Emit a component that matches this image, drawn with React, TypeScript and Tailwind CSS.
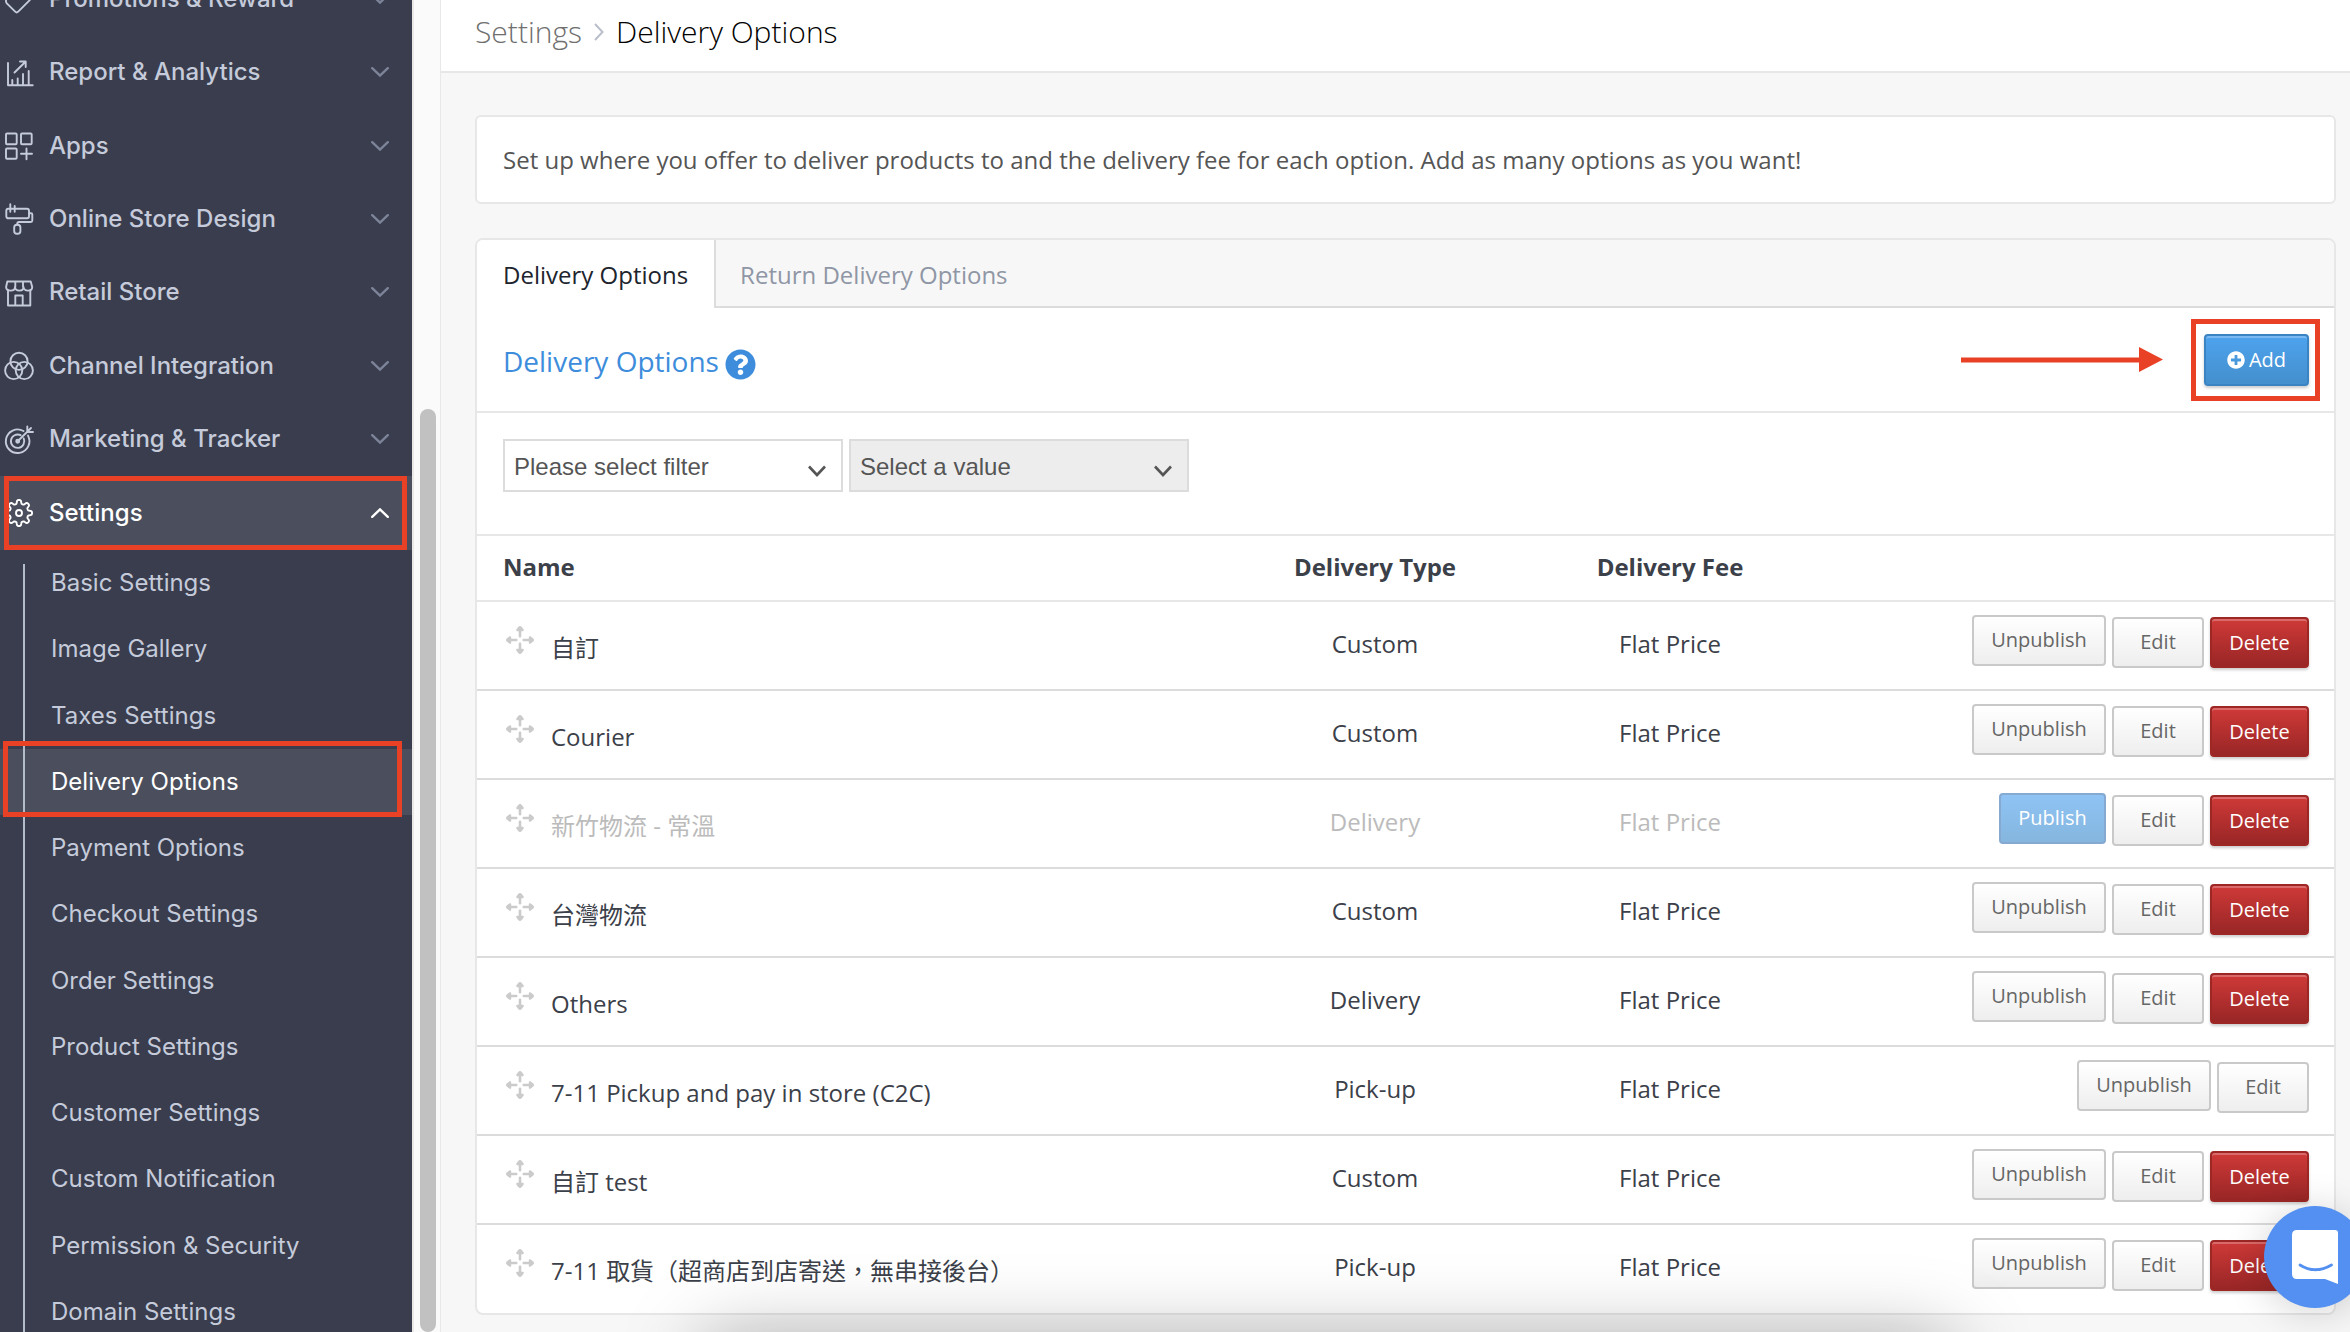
import React from 'react';
import { FaPlusCircle, FaQuestionCircle } from 'react-icons/fa';
import clsx from 'clsx';

interface DeliveryOption {
  name: string;
  type: string;
  fee: string;
  published: boolean;
  deletable: boolean;
}

const options: DeliveryOption[] = [
  { name: '自訂', type: 'Custom', fee: 'Flat Price', published: true, deletable: true },
  { name: 'Courier', type: 'Custom', fee: 'Flat Price', published: true, deletable: true },
  { name: '新竹物流 - 常溫', type: 'Delivery', fee: 'Flat Price', published: false, deletable: true },
  { name: '台灣物流', type: 'Custom', fee: 'Flat Price', published: true, deletable: true },
  { name: 'Others', type: 'Delivery', fee: 'Flat Price', published: true, deletable: true },
  { name: '7-11 Pickup and pay in store (C2C)', type: 'Pick-up', fee: 'Flat Price', published: true, deletable: false },
  { name: '自訂 test', type: 'Custom', fee: 'Flat Price', published: true, deletable: true },
  { name: '7-11 取貨（超商店到店寄送，無串接後台）', type: 'Pick-up', fee: 'Flat Price', published: true, deletable: true },
];

// Outline of the eight-toothed settings gear
const gearPath = (() => {
  const points: string[] = [];
  for (let i = 0; i < 192; i++) {
    const angle = (i / 192) * Math.PI * 2;
    const radius = 11.2 + 1.9 * Math.tanh(2 * Math.cos(angle * 8));
    points.push(`${(14 + radius * Math.cos(angle)).toFixed(2)} ${(14 + radius * Math.sin(angle)).toFixed(2)}`);
  }
  return `M${points.join('L')}Z`;
})();

const icons: Record<string, React.ReactNode> = {
  promotions: <path d="M1 4v12q0 1.500.8 2.300l8.400 8.400q1.500 1.500 3 0l11.300-11.300q1.500-1.500 0-3L14 2H3Q1 2 1 4Z" />,
  report: (
    <>
      <path d="M3 5v22.300h24.700M7.300 27v-5M12.700 27v-6.500M18 27V16M23.700 27V13" />
      <path d="M9.500 14.500L20.500 3.700M15 3.500h5.700V9" />
    </>
  ),
  apps: (
    <>
      <rect x="1" y="1.500" width="10.700" height="10.700" rx="1" />
      <rect x="16" y="1.500" width="10.700" height="10.700" rx="1" />
      <rect x="1" y="16.500" width="10.700" height="10.300" rx="1" />
      <path d="M21.500 16.500v10.700M16 21.800h11" />
    </>
  ),
  design: (
    <>
      <rect x="1.300" y="3.700" width="22.700" height="9.600" rx="2" />
      <path d="M5.300-.7v7.400M9.700.9v5.800M24 8.200h2q1.300 0 1.300 1.300v6q0 1.500-1.500 1.500H14q-1.700 0-1.700 1.600v1.100" />
      <rect x="9.200" y="19.700" width="6.200" height="9" rx="2.800" />
    </>
  ),
  store: (
    <>
      <path d="M3 12.300V27.500h22.300V12.300M10.300 27.500V17.500h7.400v10" />
      <path d="M2.300 3.500h23.400l1.500 5.500c0 4.800-8.200 4.800-8.700 0 0 4.800-8.200 4.800-8.500 0 0 4.800-8.700 4.800-8.900 0ZM10.300 3.500V9M18 3.500V9" />
    </>
  ),
  channel: (
    <>
      <circle cx="14" cy="9.300" r="8.600" />
      <circle cx="8.700" cy="18.500" r="8.600" />
      <circle cx="19.300" cy="18.500" r="8.600" />
    </>
  ),
  marketing: (
    <>
      <path d="M18.500 6A11.800 11.800 0 1 0 23 10.600" />
      <path d="M15.600 10.200a6.700 6.700 0 1 0 3.100 3.200M12.700 16.200L22 7M22.300 1.500V7h5.700M22 7l4-4" />
      <circle cx="12.700" cy="16.200" r="1.500" />
    </>
  ),
  settings: (
    <>
      <path d={gearPath} />
      <circle cx="14" cy="14" r="3" />
    </>
  ),
};

const menu = [
  { icon: 'promotions', label: 'Promotions & Reward' },
  { icon: 'report', label: 'Report & Analytics' },
  { icon: 'apps', label: 'Apps' },
  { icon: 'design', label: 'Online Store Design' },
  { icon: 'store', label: 'Retail Store' },
  { icon: 'channel', label: 'Channel Integration' },
  { icon: 'marketing', label: 'Marketing & Tracker' },
];

const subMenu = [
  'Basic Settings',
  'Image Gallery',
  'Taxes Settings',
  'Delivery Options',
  'Payment Options',
  'Checkout Settings',
  'Order Settings',
  'Product Settings',
  'Customer Settings',
  'Custom Notification',
  'Permission & Security',
  'Domain Settings',
];

const MenuIcon: React.FC<{ name: string }> = ({ name }) => (
  <svg
    viewBox="0 0 28 28"
    className="h-7 w-7 shrink-0 overflow-visible"
    fill="none"
    stroke="currentColor"
    strokeWidth="1.9"
    strokeLinejoin="round"
    strokeLinecap="round"
    aria-hidden="true"
  >
    {icons[name]}
  </svg>
);

const Chevron: React.FC<{ className?: string }> = ({ className }) => (
  <svg viewBox="0 0 18 10" className={clsx('h-2.5 w-[18px] shrink-0', className)} fill="none" stroke="currentColor" strokeWidth="2.4" aria-hidden="true">
    <path d="M1.200 1.200L9 8.600l7.800-7.400" strokeLinecap="round" />
  </svg>
);

const MoveIcon = () => (
  <svg viewBox="0 0 28 28" className="ml-[3px] h-7 w-7 shrink-0 text-[#cbcbcb]" fill="currentColor" aria-hidden="true">
    {[0, 90, 180, 270].map((turn) => (
      <path key={turn} d="M14 0Q15 0 15.800 1L17.700 3.600Q18.200 5 17 5.200H15.300V10.500Q15.300 11.500 14 11.500T12.700 10.500V5.200H11Q9.800 5 10.300 3.600L12.200 1Q13 0 14 0Z" transform={`rotate(${turn} 14 14)`} />
    ))}
  </svg>
);

const Sidebar = () => (
  <aside className="w-[414px] shrink-0 overflow-hidden border-r-2 border-[#ebe9e8] bg-[#393d4d] font-[Inter,sans-serif] text-2xl text-[#c5cbda]">
    <nav aria-label="Main menu">
      {/* The menu is scrolled, so its first entry is partly out of view */}
      <div className="-mt-[38px] grid h-[514px] auto-rows-fr">
        {menu.map((item) => (
          <button key={item.label} type="button" className="flex items-center gap-4 pr-[23px] pl-[5px] font-medium">
            <MenuIcon name={item.icon} />
            <span className="flex-1 text-left">{item.label}</span>
            <Chevron className="text-[#7d8499]" />
          </button>
        ))}
      </div>
      <button type="button" aria-expanded="true" className="relative flex h-[74px] w-full items-center gap-4 bg-[#4b4f5d] pr-[23px] pl-[5px] font-medium text-white">
        <MenuIcon name="settings" />
        <span className="flex-1 text-left">Settings</span>
        <Chevron className="rotate-180" />
        <span className="absolute inset-y-0 right-[5px] left-1 border-5 border-[#e94126]" />
      </button>

      <div className="relative">
        <ul className="grid h-[795px] auto-rows-fr">
          {subMenu.map((label) => {
            const active = label === 'Delivery Options';
            return (
              <li key={label} className={clsx('relative', active && 'z-10 bg-[#4b4f5d]')}>
                <a href="#" className={clsx('flex h-full items-center pl-[51px]', active && 'text-white')}>
                  {label}
                </a>
                {active && (
                  <>
                    <span className="absolute inset-y-0 left-[23px] w-0.5 bg-[#b3bcc9]" />
                    <span className="absolute -top-2 right-[10px] -bottom-0.5 left-[3px] border-5 border-[#e94126]" />
                  </>
                )}
              </li>
            );
          })}
        </ul>
        {/* Guide line along the sub menu */}
        <span className="absolute top-[14px] bottom-0 left-[23px] w-0.5 bg-[#b3bcc9]" />
      </div>
    </nav>
  </aside>
);

const plainButton = 'border-[#c9c9c9] bg-gradient-to-b from-white to-[#eeeeee] text-[#666666]';
const dangerButton =
  'border-[#9c2725] bg-gradient-to-b from-[#cf3a38] to-[#992626] text-white shadow-[inset_0_2px_0_rgba(255,255,255,0.25),0_2px_3px_rgba(0,0,0,0.2)]';

const Row: React.FC<{ option: DeliveryOption }> = ({ option }) => (
  <tr className={clsx('group', option.published ? 'text-[#3b4049]' : 'text-[#bbbbbb]')}>
    <td className="h-[89px] border-b-2 border-[#dcdcdc] pl-[26px] align-top group-last:h-[88px] group-last:border-b-0">
      <div className="flex items-start gap-[17px] pt-6">
        <MoveIcon />
        <span className="pt-1 leading-9">{option.name}</span>
      </div>
    </td>
    <td className="border-b-2 border-[#dcdcdc] pt-6 text-center align-top leading-9 group-last:border-b-0">{option.type}</td>
    <td className="border-b-2 border-[#dcdcdc] pt-6 text-center align-top leading-9 group-last:border-b-0">{option.fee}</td>
    <td className="border-b-2 border-[#dcdcdc] pt-[13px] pr-[25px] align-top group-last:border-b-0">
      <div className="flex items-end justify-end gap-1.5 text-xl leading-7">
        {option.published ? (
          <button type="button" className={clsx('mb-0.5 h-[51px] w-[134px] rounded border-2 pb-0.5', plainButton)}>Unpublish</button>
        ) : (
          <button type="button" className="mb-0.5 h-[51px] w-[107px] rounded border-2 border-[#86a9d2] bg-gradient-to-b from-[#8fc3f4] to-[#84b6de] pb-px text-white">Publish</button>
        )}
        <button type="button" className={clsx('h-[51px] w-[92px] rounded border-2 pb-px', plainButton)}>Edit</button>
        {option.deletable && (
          <button type="button" className={clsx('h-[51px] w-[99px] rounded border-2 font-medium', dangerButton)}>Delete</button>
        )}
      </div>
    </td>
  </tr>
);

const Select: React.FC<{ id: string; label: string; disabled?: boolean }> = ({ id, label, disabled }) => (
  <div className="relative w-[340px]">
    <select
      id={id}
      aria-label={label}
      disabled={disabled}
      className={clsx(
        'block h-[53px] w-full appearance-none border-2 border-[#dcdcdc] px-[9px] pt-0.5 font-["Liberation_Sans",Arial,sans-serif] text-2xl text-[#555555] opacity-100',
        disabled ? 'bg-[#ededed]' : 'bg-white',
      )}
    >
      <option>{label}</option>
    </select>
    <svg viewBox="0 0 18 12" className="pointer-events-none absolute top-[26px] right-[17px] h-3 w-[18px]" fill="none" stroke="#555555" strokeWidth="2.6" aria-hidden="true">
      <path d="M1 1.500L9 10l8-8.500" />
    </svg>
  </div>
);

export default function App() {
  return (
    <div className='relative flex h-screen overflow-hidden bg-[#f7f7f7] font-["Open_Sans","Noto_Sans_CJK_TC",sans-serif] text-2xl'>
      <Sidebar />

      {/* Scrollbar */}
      <div className="flex w-[27px] shrink-0 border-r border-[#e8e8e8] bg-[#fafafa] pt-[409px] pl-1.5">
        <div className="w-4 rounded-full bg-[#c1c1c1]" />
      </div>

      <main className="min-w-0 flex-1">
        <header className="border-b-2 border-[#e7e7e7] bg-white pt-3 pb-[19px] pl-[34px]">
          <nav aria-label="Breadcrumb" className="flex items-center text-3xl leading-10 font-light">
            <a href="#" className="text-[#6f6f6f]">Settings</a>
            <svg viewBox="0 0 10 18" className="mx-3 h-[18px] w-2.5" fill="none" stroke="#b9bfca" strokeWidth="2" aria-hidden="true">
              <path d="M1 1l7.500 8L1 17" />
            </svg>
            <span className="text-black">Delivery Options</span>
          </nav>
        </header>

        <div className="pt-[42px] pr-[14px] pl-[34px]">
          <p className="rounded-md border-2 border-[#e7e7e7] bg-white px-[26px] py-6 leading-[37px] text-[#555555]">
            Set up where you offer to deliver products to and the delivery fee for each option. Add as many options as you want!
          </p>

          <section className="mt-[34px] overflow-hidden rounded-lg border-2 border-[#e7e7e7] bg-white">
            <div role="tablist" className="flex h-[68px] bg-[#f7f7f7]">
              <button type="button" role="tab" aria-selected="true" className="border-r-2 border-[#dcdcdc] bg-white px-[26px] pt-0.5 text-[#20242d]">
                Delivery Options
              </button>
              <button type="button" role="tab" aria-selected="false" className="border-b-2 border-[#dcdcdc] px-6 pt-1 text-[#8f96a5]">
                Return Delivery Options
              </button>
              <div className="flex-1 border-b-2 border-[#dcdcdc]" />
            </div>

            <div className="flex h-[105px] items-center border-b-2 border-[#e7e7e7] pr-[25px] pl-[26px]">
              <h1 className="flex flex-1 items-center gap-1.5 pt-[3px] text-[28px] leading-10 text-[#3d8ddc]">
                Delivery Options
                <FaQuestionCircle className="mt-1.5 h-[31px] w-[31px]" />
              </h1>
              <svg viewBox="0 0 202 25" className="mr-[41px] h-[25px] w-[202px]" fill="#e94126" aria-hidden="true">
                <path d="M0 10.500H178V0L202 12.500 178 25V15.500H0Z" />
              </svg>
              <div className="relative">
                <button
                  type="button"
                  className="flex h-[52px] w-[105px] items-center justify-center gap-1 rounded border-2 border-[#3a84c4] bg-gradient-to-b from-[#4ea3ee] to-[#448fcd] text-xl text-white shadow-[inset_0_2px_0_rgba(255,255,255,0.25),0_2px_3px_rgba(0,0,0,0.2)]"
                >
                  <FaPlusCircle className="h-[18px] w-[18px]" />
                  Add
                </button>
                <span className="pointer-events-none absolute -inset-y-[15px] -right-[11px] -left-[13px] border-5 border-[#e94126]" />
              </div>
            </div>

            <div className="flex gap-1.5 border-b-2 border-[#e7e7e7] pt-[26px] pb-[42px] pl-[26px]">
              <Select id="filter" label="Please select filter" />
              <Select id="value" label="Select a value" disabled />
            </div>

            <table className="w-full table-fixed border-separate border-spacing-0">
              <thead>
                <tr className="text-[#3b4049]">
                  <th className="h-[66px] border-b-2 border-[#e7e7e7] pb-0.5 pl-[26px] text-left">Name</th>
                  <th className="w-[296px] border-b-2 border-[#e7e7e7] pb-0.5">Delivery Type</th>
                  <th className="w-[294px] border-b-2 border-[#e7e7e7] pb-0.5">Delivery Fee</th>
                  <th className="w-[517px] border-b-2 border-[#e7e7e7]" />
                </tr>
              </thead>
              <tbody>
                {options.map((option) => (
                  <Row key={option.name} option={option} />
                ))}
              </tbody>
            </table>
          </section>
        </div>
      </main>

      {/* Shade rising from the bottom edge */}
      <div className="pointer-events-none absolute top-full right-[17%] left-[30%] h-20 shadow-[0_10px_80px_rgba(0,0,0,0.35)]" />

      <button
        type="button"
        aria-label="Open chat"
        className="absolute -right-4 bottom-6 flex h-[102px] w-[102px] items-center justify-center rounded-full bg-[#5390f1] shadow-[0_4px_40px_rgba(0,0,0,0.18)]"
      >
        <svg viewBox="0 0 46 54" className="h-[54px] w-[46px]" aria-hidden="true">
          <path d="M5 0H43Q46 0 46 3V54L33 49H5Q0 49 0 44V5Q0 0 5 0Z" fill="#fff" />
          <path d="M8 35Q23 44.500 39.500 35" fill="none" stroke="#5390f1" strokeWidth="2.800" strokeLinecap="round" />
        </svg>
      </button>
    </div>
  );
}
